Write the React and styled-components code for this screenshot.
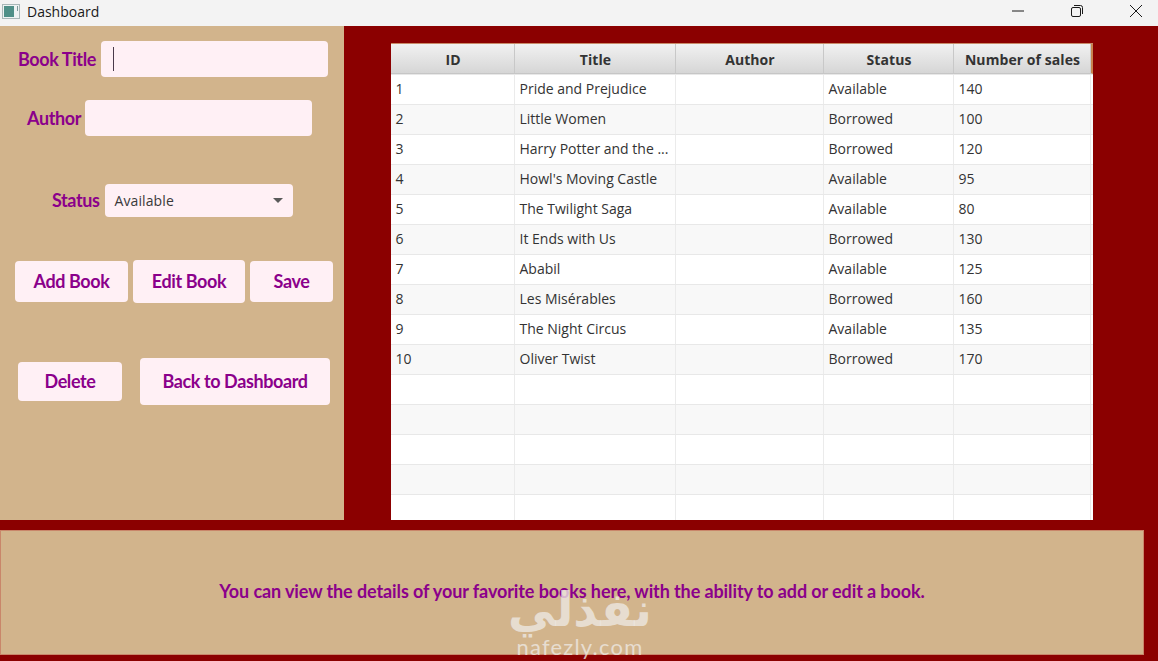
import React from "react";
import styled, { createGlobalStyle } from "styled-components";

const Global = createGlobalStyle`
  html, body { margin: 0; padding: 0; height: 100%; background: #8b0000; overflow: hidden; }
  * { box-sizing: border-box; }
`;

const Windowed = styled.div`
  position: relative;
  width: 1158px;
  height: 661px;
  background: #8b0000;
  overflow: hidden;
`;

const TitleBar = styled.header`
  height: 26px;
  background: #f3f3f3;
  display: flex;
  align-items: center;
  padding: 0 0 4px 2px;
  font: 14px "Open Sans", "Noto Sans", sans-serif;
  color: #1a1a1a;
`;

const TitleText = styled.span`
  margin-left: 7px;
  flex: 1;
`;

const WinControls = styled.div`
  display: flex;
  align-items: center;
  padding-right: 16px;
  gap: 47px;
`;

const Main = styled.div`
  display: flex;
  align-items: flex-start;
  height: 494px;
`;

const SidePanel = styled.aside`
  width: 344px;
  height: 494px;
  background: #d2b48c;
  padding-top: 15px;
`;

const FormRow = styled.div`
  display: flex;
  align-items: center;
  gap: ${(p) => p.$gap}px;
  padding-left: ${(p) => p.$left}px;
  margin-bottom: ${(p) => p.$after}px;
`;

const Label = styled.label`
  font: 700 18px "Lato", "Liberation Sans", sans-serif;
  letter-spacing: -0.4px;
  padding-bottom: 1px;
  color: #8b008b;
  white-space: nowrap;
`;

const Field = styled.div`
  width: 227px;
  height: 36px;
  background: #fff0f5;
  border-radius: 4px;
  display: flex;
  align-items: center;
  padding-left: 12px;
`;

const Caret = styled.span`
  width: 1px;
  height: 24px;
  background: #4a3a4a;
`;

const Combo = styled.div`
  width: 188px;
  height: 33px;
  background: #fff0f5;
  border-radius: 4px;
  display: flex;
  align-items: center;
  justify-content: space-between;
  padding: 0 10px;
  font: 14px "Open Sans", "Noto Sans", sans-serif;
  letter-spacing: 0.1px;
  color: #3a3a3a;
`;

const Arrow = styled.span`
  width: 0;
  height: 0;
  border-left: 5px solid transparent;
  border-right: 5px solid transparent;
  border-top: 5px solid #5a5a5a;
`;

const ButtonRow = styled.div`
  display: flex;
  align-items: center;
  gap: ${(p) => p.$gap}px;
  padding-left: ${(p) => p.$left}px;
  margin-bottom: ${(p) => p.$after}px;
`;

const Button = styled.button`
  width: ${(p) => p.$w}px;
  height: ${(p) => p.$h}px;
  border: 0;
  padding: 0 0 2px;
  background: #fff0f5;
  border-radius: 4px;
  font: 700 18px "Lato", "Liberation Sans", sans-serif;
  letter-spacing: -0.4px;
  color: #8b008b;
`;

const TableWrap = styled.section`
  width: 702px;
  height: 477px;
  margin: 17px 0 0 47px;
  background: #fff;
  overflow: hidden;
  border-top: 1px solid #c88a68;
`;

const HeaderRow = styled.div`
  display: grid;
  grid-template-columns: 124px 161px 148px 130px 137px;
  height: 30px;
  border-right: 2px solid #c8824e;
  background: linear-gradient(#f1f1f1, #d6d6d6);
  border-bottom: 1px solid #c6c6c6;
`;

const HeadCell = styled.div`
  display: flex;
  align-items: center;
  justify-content: center;
  padding: 1px 0 0 1px;
  border-right: 1px solid #c8c8c8;
  font: 700 14px "Open Sans", "Noto Sans", sans-serif;
  letter-spacing: 0.07px;
  color: #333;
`;

const Row = styled.div`
  display: grid;
  grid-template-columns: 124px 161px 148px 130px 137px;
  height: 30px;
  background: ${(p) => (p.$odd ? "#f8f8f8" : "#ffffff")};
  border-top: 1px solid #e8e8e8;
  &:first-of-type { border-top: 0; }
`;

const Cell = styled.div`
  display: flex;
  align-items: center;
  padding: 0 0 3px 4.5px;
  border-right: 1px solid #ebebeb;
  font: 14px "Open Sans", "Noto Sans", sans-serif;
  color: #333;
  white-space: nowrap;
  overflow: hidden;
`;

const Footer = styled.footer`
  width: 1144px;
  height: 125px;
  margin-top: 10px;
  padding-bottom: 4px;
  background: #d2b48c;
  border: 1px solid #c9866a;
  display: flex;
  align-items: center;
  justify-content: center;
  font: 700 18px "Lato", "Liberation Sans", sans-serif;
  letter-spacing: -0.1px;
  color: #8b008b;
`;

const Watermark = styled.div`
  position: absolute;
  left: 505px;
  top: 586px;
  width: 150px;
  height: 75px;
  display: flex;
  flex-direction: column;
  align-items: center;
  color: rgba(238, 233, 228, 0.78);
  pointer-events: none;
`;

const WatermarkArabic = styled.span`
  font: 700 47px/48px "DejaVu Sans", sans-serif;
`;

const WatermarkLatin = styled.span`
  font: 400 22px/26px "Lato", sans-serif;
  letter-spacing: 1.2px;
`;

const columns = ["ID", "Title", "Author", "Status", "Number of sales"];
const books = [
  ["1", "Pride and Prejudice", "", "Available", "140"],
  ["2", "Little Women", "", "Borrowed", "100"],
  ["3", "Harry Potter and the ...", "", "Borrowed", "120"],
  ["4", "Howl's Moving Castle", "", "Available", "95"],
  ["5", "The Twilight Saga", "", "Available", "80"],
  ["6", "It Ends with Us", "", "Borrowed", "130"],
  ["7", "Ababil", "", "Available", "125"],
  ["8", "Les Misérables", "", "Borrowed", "160"],
  ["9", "The Night Circus", "", "Available", "135"],
  ["10", "Oliver Twist", "", "Borrowed", "170"],
  ["", "", "", "", ""],
  ["", "", "", "", ""],
  ["", "", "", "", ""],
  ["", "", "", "", ""],
  ["", "", "", "", ""],
];

const AppIcon = () => (
  <svg width="18" height="15" viewBox="0 0 18 15">
    <rect x="0.5" y="0.5" width="17" height="14" fill="#eef3f3" stroke="#a9b8b8" />
    <rect x="2" y="2" width="10" height="11" fill="#4f9088" />
    <rect x="15" y="2" width="1" height="5" fill="#7f9a9a" />
  </svg>
);

const MinIcon = () => (
  <svg width="12" height="12" viewBox="0 0 12 12">
    <path d="M0 6h12" stroke="#1a1a1a" strokeWidth="1" />
  </svg>
);

const RestoreIcon = () => (
  <svg width="12" height="12" viewBox="0 0 12 12" fill="none">
    <rect x="0.5" y="2.5" width="9" height="9" rx="1.5" stroke="#1a1a1a" />
    <path d="M3 0.5h6.5a2 2 0 0 1 2 2V9" stroke="#1a1a1a" />
  </svg>
);

const CloseIcon = () => (
  <svg width="12" height="12" viewBox="0 0 12 12">
    <path d="M0 0l12 12M12 0L0 12" stroke="#1a1a1a" strokeWidth="1" />
  </svg>
);

export default function App() {
  return (
    <Windowed>
      <Global />
      <TitleBar>
        <AppIcon />
        <TitleText>Dashboard</TitleText>
        <WinControls>
          <MinIcon />
          <RestoreIcon />
          <CloseIcon />
        </WinControls>
      </TitleBar>
      <Main>
        <SidePanel>
          <FormRow $left={18} $gap={5} $after={23}>
            <Label>Book Title</Label>
            <Field><Caret /></Field>
          </FormRow>
          <FormRow $left={27} $gap={4} $after={48}>
            <Label>Author</Label>
            <Field />
          </FormRow>
          <FormRow $left={52} $gap={5} $after={43}>
            <Label>Status</Label>
            <Combo>
              Available
              <Arrow />
            </Combo>
          </FormRow>
          <ButtonRow $left={15} $gap={5} $after={55}>
            <Button $w={113} $h={41}>Add Book</Button>
            <Button $w={112} $h={43}>Edit Book</Button>
            <Button $w={83} $h={41}>Save</Button>
          </ButtonRow>
          <ButtonRow $left={18} $gap={18} $after={0}>
            <Button $w={104} $h={39}>Delete</Button>
            <Button $w={190} $h={47}>Back to Dashboard</Button>
          </ButtonRow>
        </SidePanel>
        <TableWrap>
          <HeaderRow>
            {columns.map((c) => (
              <HeadCell key={c}>{c}</HeadCell>
            ))}
          </HeaderRow>
          {books.map((b, i) => (
            <Row key={i} $odd={i % 2 === 1}>
              {b.map((v, j) => (
                <Cell key={j}>{v}</Cell>
              ))}
            </Row>
          ))}
        </TableWrap>
      </Main>
      <Footer>You can view the details of your favorite books here, with the ability to add or edit a book.</Footer>
      <Watermark>
        <WatermarkArabic>نفذلي</WatermarkArabic>
        <WatermarkLatin>nafezly.com</WatermarkLatin>
      </Watermark>
    </Windowed>
  );
}
